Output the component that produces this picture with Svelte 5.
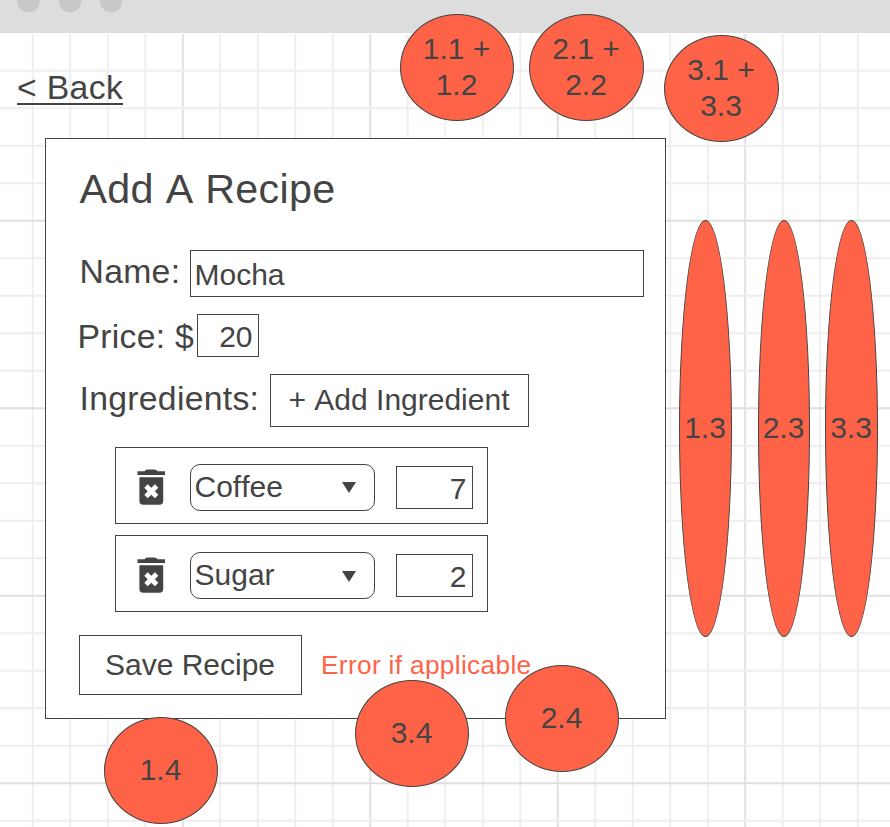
<script>
  const step = 37.5;
  const columns = Array.from({ length: 24 }, (_, i) => ({ at: 32.75 + i * step, major: i % 5 === 4 }));
  const rows = Array.from({ length: 21 }, (_, i) => ({ at: 70.7 + i * step, major: i % 5 === 4 }));
  const dots = [28.5, 70, 111];

  const ingredients = [
    { name: 'Coffee', amount: '7', nudge: 0 },
    { name: 'Sugar', amount: '2', nudge: 1 }
  ];

  const notes = [
    { lines: ['1.1 +', '1.2'], x: 400, y: 14, w: 114, h: 107 },
    { lines: ['2.1 +', '2.2'], x: 529, y: 14, w: 115, h: 107 },
    { lines: ['3.1 +', '3.3'], x: 664, y: 35, w: 115, h: 107 },
    { lines: ['1.3'], x: 679, y: 220, w: 53, h: 417 },
    { lines: ['2.3'], x: 758, y: 220, w: 52, h: 417 },
    { lines: ['3.3'], x: 825, y: 220, w: 53, h: 417 },
    { lines: ['1.4'], x: 104, y: 717, w: 114, h: 107 },
    { lines: ['3.4'], x: 355, y: 680, w: 114, h: 107 },
    { lines: ['2.4'], x: 505, y: 665, w: 114, h: 107 }
  ];
</script>

<div class="canvas">
  <svg class="grid" width="890" height="827" viewBox="0 0 890 827" aria-hidden="true">
    {#each columns as c}
      <line x1={c.at} x2={c.at} y1="34" y2="827" class:major={c.major} />
    {/each}
    {#each rows as r}
      <line x1="0" x2="890" y1={r.at} y2={r.at} class:major={r.major} />
    {/each}
  </svg>

  <header>
    <svg width="890" height="33" viewBox="0 0 890 33" aria-hidden="true">
      {#each dots as cx}
        <circle {cx} cy="1" r="11.2" />
      {/each}
    </svg>
  </header>

  <nav><span class="back">&lt; Back</span></nav>

  <main>
    <h1>Add A Recipe</h1>

    <div class="row name">
      <span class="label">Name:</span>
      <div class="box">Mocha</div>
    </div>

    <div class="row price">
      <span class="label">Price: $</span>
      <div class="box num">20</div>
    </div>

    <div class="row adding">
      <span class="label">Ingredients:</span>
      <button>+ Add Ingredient</button>
    </div>

    <ul>
      {#each ingredients as item}
        <li>
          <svg class="trash" width="28" height="36" viewBox="0 0 28 36" aria-hidden="true">
            <path d="M.5 2.2H7.5Q8.5 .4 10.5 .4H17.5Q19.5 .4 20.5 2.2H28V6.1H.5Z" />
            <path d="M2.4 8.2H26.2V32Q26.2 35.8 22.4 35.8H6.2Q2.4 35.8 2.4 32Z" />
            <path class="cross" d="M9 16.9L19.6 27.5M19.6 16.9L9 27.5" />
          </svg>
          <div class="select">
            <span>{item.name}</span>
            <svg width="14" height="11" viewBox="0 0 14 11" style:margin-top="{item.nudge * 2}px" aria-hidden="true">
              <path d="M0 0H14L7 11Z" />
            </svg>
          </div>
          <div class="box num">{item.amount}</div>
        </li>
      {/each}
    </ul>

    <div class="row footer">
      <button class="save">Save Recipe</button>
      <span class="error">Error if applicable</span>
    </div>
  </main>

  {#each notes as n}
    <div class="note" style:left="{n.x}px" style:top="{n.y}px" style:width="{n.w}px" style:height="{n.h}px">
      {#each n.lines as line}
        <span>{line}</span>
      {/each}
    </div>
  {/each}
</div>

<style>
  :global(body) {
    margin: 0;
    background: #fff;
  }
  .canvas {
    position: relative;
    width: 890px;
    height: 827px;
    overflow: hidden;
    background: #fff;
    color: #444;
    font: 30px/36px 'Liberation Sans', Arial, sans-serif;
    font-kerning: none;
  }
  .canvas * {
    box-sizing: border-box;
  }
  svg {
    display: block;
    flex: none;
    fill: #444;
  }
  .grid {
    position: absolute;
    inset: 0;
  }
  .grid line {
    stroke: #eee;
    stroke-width: 1.9;
  }
  .grid line.major {
    stroke: #dfdfdf;
  }
  header {
    position: relative;
    height: 33px;
    background: #ddd;
  }
  header svg {
    fill: #c8c8c8;
  }
  nav {
    position: relative;
    height: 105px;
    padding: 34px 0 0 17px;
  }
  .back {
    display: inline-block;
    height: 38px;
    border-bottom: 2px solid #444;
    font-size: 33.75px;
    line-height: 41px;
    letter-spacing: 0.01em;
  }
  main {
    position: relative;
    width: 621px;
    height: 581px;
    margin-left: 45px;
    padding: 25px 21px 0 33px;
    border: 1px solid #444;
    background: #fff;
  }
  h1 {
    margin: 0 0 36px;
    padding-left: 0.5px;
    font-size: 41.25px;
    font-weight: 400;
    line-height: 50px;
    letter-spacing: 0.32px;
  }
  .row {
    display: flex;
    align-items: center;
  }
  .label {
    flex: none;
    padding-left: 0.5px;
    font-size: 33.75px;
    line-height: 40px;
    letter-spacing: 0.28px;
    white-space: nowrap;
  }
  .box {
    display: flex;
    align-items: center;
    border: 1px solid #444;
    background: #fff;
    padding: 2px 4px 0 3.5px;
  }
  .num {
    justify-content: flex-end;
    padding-right: 5.5px;
  }
  .name {
    height: 47px;
    margin-bottom: 17px;
  }
  .name .label {
    width: 111px;
    padding-bottom: 6px;
  }
  .name .box {
    flex: 1;
    height: 47px;
  }
  .price {
    height: 43px;
    margin: 0 0 17px -2px;
  }
  .price .label {
    width: 120px;
    padding-top: 1px;
  }
  .price .box {
    width: 62px;
    height: 43px;
  }
  .adding .label {
    width: 191px;
    padding-bottom: 6px;
  }
  button {
    width: 259px;
    height: 53px;
    padding: 0 1px 2px 0;
    border: 1px solid #444;
    background: #fff;
    color: #444;
    font: inherit;
    font-kerning: none;
    white-space: nowrap;
  }
  ul {
    display: flex;
    flex-direction: column;
    gap: 11px;
    margin: 20px 0 23px 36px;
    padding: 0;
    list-style: none;
  }
  li {
    display: flex;
    align-items: center;
    width: 373px;
    height: 77px;
    padding: 3px 14px 0 21px;
    border: 1px solid #444;
  }
  .cross {
    fill: none;
    stroke: #fff;
    stroke-width: 4.9;
  }
  .select {
    display: flex;
    align-items: center;
    justify-content: space-between;
    width: 185px;
    height: 47px;
    margin: 0 21px 0 25px;
    padding: 0 18px 0 3.5px;
    border: 1px solid #444;
    border-radius: 10px;
  }
  .select span {
    padding-bottom: 1px;
  }
  li .box {
    width: 77px;
    height: 43px;
    padding-top: 4px;
  }
  .footer {
    margin-left: 0;
  }
  button.save {
    width: 223px;
    height: 60px;
    padding: 0 1px 0 0;
  }
  .error {
    margin-left: 19px;
    color: #ff6347;
    font-size: 26.25px;
    letter-spacing: 0.33px;
    white-space: nowrap;
  }
  .note {
    position: absolute;
    display: flex;
    flex-direction: column;
    align-items: center;
    justify-content: center;
    padding: 0 1px 2px 0;
    border: 1px solid #444;
    border-radius: 50%;
    background: #ff6347;
    white-space: nowrap;
  }
</style>
